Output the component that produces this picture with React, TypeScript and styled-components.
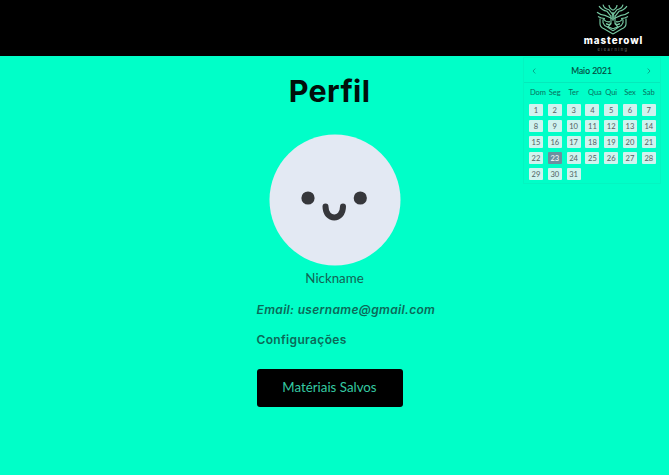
import React from 'react';
import styled, { createGlobalStyle } from 'styled-components';

const GlobalStyle = createGlobalStyle`
  * { box-sizing: border-box; }
  body { margin: 0; background: #00ffc8; font-family: Lato, sans-serif; }
`;

const Page = styled.div`
  position: relative;
  height: 475px;
  background: #00ffc8;
  overflow: hidden;
`;

const TopBar = styled.header`
  height: 56px;
  background: #000;
  display: flex;
  justify-content: flex-end;
  padding-right: 25px;
`;

const Brand = styled.div`
  width: 62px;
  padding-top: 3px;
  display: flex;
  flex-direction: column;
  align-items: center;
`;

const BrandName = styled.span`
  font: 800 9.8px/11px Inter, sans-serif;
  letter-spacing: 0.95px;
  margin-right: -1px;
  color: #fff;
`;

const BrandTag = styled.span`
  font: 400 4px/5px Inter, sans-serif;
  letter-spacing: 1.5px;
  color: #777;
  margin-top: 1px;
`;

const Profile = styled.main`
  width: 156px;
  margin-left: 256.5px;
  display: flex;
  flex-direction: column;
  align-items: flex-start;
`;

const Title = styled.h1`
  align-self: center;
  margin: 17px 0 0 -10px;
  font: 700 30.5px/36px Inter, sans-serif;
  letter-spacing: 0.3px;
  color: #000f0b;
`;

const Avatar = styled.svg`
  display: block;
  width: 132px;
  height: 132px;
  margin: 25px 0 0 12px;
`;

const Nickname = styled.p`
  width: 156px;
  margin: 4px 0 0;
  text-align: center;
  font: 400 13.3px/16px Lato, sans-serif;
  color: #116353;
`;

const Detail = styled.p<{ $italic?: boolean; $gap: number; $tracking: number }>`
  margin: ${(p) => p.$gap}px 0 0;
  white-space: nowrap;
  font: ${(p) => (p.$italic ? 'italic' : 'normal')} 600 12px/16px Inter, sans-serif;
  letter-spacing: ${(p) => p.$tracking}px;
  color: #0b6a58;
`;

const SavedButton = styled.button`
  width: 146px;
  height: 38px;
  margin: 21px 0 0;
  padding: 0 0 3px;
  border: 0;
  border-radius: 3px;
  background: #000;
  color: #35c9a2;
  font: 400 13.3px/18px Lato, sans-serif;
`;

const Calendar = styled.section`
  position: absolute;
  top: 57px;
  left: 523px;
  width: 138px;
  height: 127px;
  border: 1px solid #04f5c1;
  color: #08705d;
`;

const CalendarHeader = styled.div`
  height: 25px;
  padding: 1px 9px 0 8px;
  display: flex;
  align-items: center;
  justify-content: space-between;
  border-bottom: 1px solid #04eabb;
`;

const Month = styled.span`
  font: 400 8.5px/12px Lato, sans-serif;
  color: #044b3e;
  -webkit-text-stroke: 0.15px #044b3e;
`;

const Chevron = styled.svg`
  width: 4px;
  height: 6px;
  fill: none;
  stroke: #08a88a;
`;

const Grid = styled.div`
  display: grid;
  grid-template-columns: repeat(7, 14px);
  column-gap: 4.8px;
  padding-left: 5px;
`;

const Weekdays = styled(Grid)`
  margin-top: 4px;
`;

const Weekday = styled.span<{ $shift: number }>`
  display: flex;
  justify-content: center;
  white-space: nowrap;
  padding-left: ${(p) => p.$shift}px;
  font: 400 7.5px/12px Lato, sans-serif;
`;

const Days = styled(Grid)`
  margin-top: 5px;
  row-gap: 4px;
`;

const Day = styled.span<{ $selected?: boolean }>`
  height: 12px;
  display: flex;
  align-items: center;
  justify-content: center;
  border-radius: 1px;
  font: 400 7.6px/12px Lato, sans-serif;
  background: ${(p) => (p.$selected ? '#6c8fa0' : '#d0f3ef')};
  color: ${(p) => (p.$selected ? '#fff' : '#50615f')};
`;

const weekdays: [string, number][] = [
  ['Dom', 4], ['Seg', 0], ['Ter', 0], ['Qua', 5], ['Qui', 0], ['Sex', 0], ['Sab', 0],
];

const OwlLogo = () => (
  <svg width="36" height="32" viewBox="0 0 36 31" preserveAspectRatio="none" fill="none" stroke="#76c8a2" strokeWidth="1.15">
    {[false, true].map((flip) => (
      <g key={String(flip)} transform={flip ? 'translate(36 0) scale(-1 1)' : undefined}>
        <path d="M4 3q3 4 8 5l4 5M8 1.5q1 4 6 5l4 5M14 2q0 3 4 5" />
        <path d="M2 9q4 3 8 3l7 3M3 13q3 2 7 2" />
        <path d="M5 15v5q0 3 4 5l9 5M8 16v3q1 3 4 4l6 4" />
        <path d="M8 15q3 4 7 3M11 20q4 2 5-1M16 12v8l-3 3 5 2M18 9v8" />
      </g>
    ))}
  </svg>
);

export default function App() {
  return (
    <Page>
      <GlobalStyle />
      <TopBar>
        <Brand>
          <OwlLogo />
          <BrandName>masterowl</BrandName>
          <BrandTag>elearning</BrandTag>
        </Brand>
      </TopBar>
      <Profile>
        <Title>Perfil</Title>
        <Avatar viewBox="0 0 132 132">
          <circle cx="66" cy="66" r="65.5" fill="#e3e9f3" />
          <circle cx="39" cy="64" r="6.6" fill="#36373b" />
          <circle cx="91.3" cy="64" r="6.6" fill="#36373b" />
          <path d="M56.5 72.5c0 14.5 17.5 14.5 17.5 0" fill="none" stroke="#36373b" strokeWidth="6" strokeLinecap="round" />
        </Avatar>
        <Nickname>Nickname</Nickname>
        <Detail $italic $gap={16} $tracking={0.34}>Email: username@gmail.com</Detail>
        <Detail $gap={14} $tracking={0.34}>Configurações</Detail>
        <SavedButton>Matériais Salvos</SavedButton>
      </Profile>
      <Calendar>
        <CalendarHeader>
          <Chevron viewBox="0 0 4 6"><path d="M3.3.5 1 3l2.3 2.5" /></Chevron>
          <Month>Maio 2021</Month>
          <Chevron viewBox="0 0 4 6"><path d="M.7.5 3 3 .7 5.5" /></Chevron>
        </CalendarHeader>
        <Weekdays>
          {weekdays.map(([name, shift]) => (
            <Weekday key={name} $shift={shift}>{name}</Weekday>
          ))}
        </Weekdays>
        <Days>
          {Array.from({ length: 31 }, (_, i) => (
            <Day key={i} $selected={i === 22}>{i + 1}</Day>
          ))}
        </Days>
      </Calendar>
    </Page>
  );
}
